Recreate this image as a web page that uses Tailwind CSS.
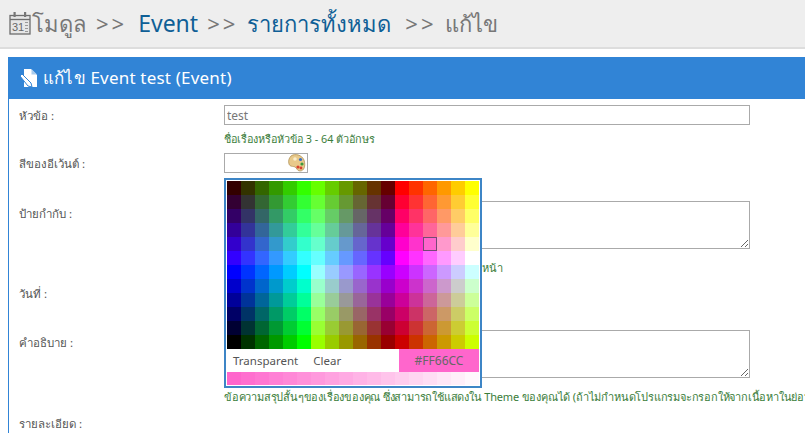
<!DOCTYPE html>
<html lang="th">
<head>
    <meta charset="utf-8"/>
    <title>Event</title>
    <script src="https://cdn.jsdelivr.net/npm/@tailwindcss/browser@4"></script>
</head>
<body class="relative h-[435px] w-[805px] overflow-hidden bg-white font-['Noto_Sans','DejaVu_Sans',sans-serif] text-[11.5px] text-[#555]">
<header class="flex h-[49px] items-center border-b-2 border-[#ddd] bg-[#eeeeee] pl-[9px] pb-[1px] text-[22px] text-[#777]">
    <svg class="mr-[1px] h-[24px] w-[22px] shrink-0" viewBox="0 0 22 24">
        <rect x="1" y="4.500" width="20" height="18.500" fill="#e6e6e6" stroke="#6e6e6e" stroke-width="1.300"/>
        <path d="M1 8.500h20" stroke="#6e6e6e" stroke-width="1.300"/>
        <rect x="4.500" y="1" width="2.200" height="5" fill="#777"/>
        <rect x="15" y="1" width="2.200" height="5" fill="#777"/>
        <text x="3" y="20" font-size="11" font-family="Liberation Sans" fill="#666">31</text>
        <path d="M16 11.500h3M16 14.500h3M16 17.500h3M16 20.500h3" stroke="#999"/>
    </svg>
    <span>โมดูล</span>
    <span class="ml-[10px] tracking-[3px]">&gt;&gt;</span>
    <a class="ml-[11px] text-[23px] text-[#0f5f96]">Event</a>
    <span class="ml-[9px] tracking-[3px]">&gt;&gt;</span>
    <a class="ml-[9px] text-[#0f5f96]">รายการทั้งหมด</a>
    <span class="ml-[14px] tracking-[3px]">&gt;&gt;</span>
    <span class="ml-[9px]">แก้ไข</span>
</header>

<main class="ml-[8px] mt-[8px] w-[797px] overflow-hidden border-l border-[#3184d6]">
    <h1 class="flex h-[42px] items-center bg-[#3184d6] pl-[11px] text-[17px] tracking-[0.2px] text-white">
        <svg class="mr-[5px] h-[20px] w-[18px] shrink-0" viewBox="0 0 18 20">
            <path d="M4 1h7l6 6v12H4z" fill="#fff"/>
            <path d="M11.500 1v5.500H17z" fill="#a9cbec"/>
            <path d="M0 8l2-2 9 9 1 4-4-1z" fill="#fff" stroke="#3184d6"/>
        </svg>
        <span>แก้ไข Event test (Event)</span>
    </h1>

    <form class="pl-[10px]">
        <div class="flex pt-[6px]">
            <label class="flex h-[20px] w-[205px] shrink-0 items-center pt-[2px]">หัวข้อ :</label>
            <div class="w-[526px]">
                <input class="block h-[20px] w-[526px] border border-[#aaa] px-[2px] text-[12px] text-[#777]" value="test"/>
                <p class="mt-[6px] h-[16px] leading-[16px] text-[10.8px] text-[#3a7d3a]">ชื่อเรื่องหรือหัวข้อ 3 - 64 ตัวอักษร</p>
            </div>
        </div>
        <div class="mt-[6px] flex">
            <label class="flex h-[20px] w-[205px] shrink-0 items-center pt-[2px]">สีของอีเว้นต์ :</label>
            <div class="flex h-[20px] w-[84px] items-center justify-end border border-[#aaa] pr-[1px]">
                <svg class="h-[18px] w-[18px]" viewBox="0 0 18 18">
                    <path d="M3 2c4-3 11-1 13 4 2 6 0 11-4 11-3 0-3-3-5-4-2-1-5 0-6-3C0 7 1 4 3 2z" fill="#e8c98a" stroke="#a98a4e" stroke-width=".7"/>
                    <circle cx="12.500" cy="5.500" r="1.600" fill="#3a6fc4"/>
                    <circle cx="14" cy="10" r="1.600" fill="#3c9a3c"/>
                    <circle cx="10" cy="13" r="1.600" fill="#d8402e"/>
                    <circle cx="13" cy="14" r="1.400" fill="#d8402e"/>
                    <circle cx="7" cy="5" r="1.800" fill="#fbeecb"/>
                </svg>
            </div>
        </div>
        <div class="mt-[28px] flex">
            <label class="flex h-[24px] w-[205px] shrink-0 items-center pt-[2px]">ป้ายกำกับ :</label>
            <div class="w-[526px]">
                <textarea class="block h-[48px] w-[526px] border border-[#aaa]"></textarea>
                <p class="mt-[11px] h-[16px] whitespace-nowrap leading-[16px] text-[11px] text-[#3a7d3a]">ป้ายกำกับจัดกลุ่ม คั่นแต่ละรายการด้วยจุลภาค ส่วนของหน้า</p>
            </div>
        </div>
        <div class="mt-[7px] flex">
            <label class="flex h-[20px] w-[205px] shrink-0 items-center pt-[2px]">วันที่ :</label>
            <input class="block h-[20px] w-[120px] border border-[#aaa]"/>
        </div>
        <div class="mt-[27px] flex">
            <label class="flex h-[24px] w-[205px] shrink-0 items-center pt-[2px]">คำอธิบาย :</label>
            <div class="w-[526px]">
                <textarea class="block h-[48px] w-[526px] border border-[#aaa]"></textarea>
                <p class="mt-[11px] h-[16px] whitespace-nowrap leading-[16px] text-[11px] tracking-[-0.2px] text-[#3a7d3a]">ข้อความสรุปสั้นๆของเรื่องของคุณ ซึ่งสามารถใช้แสดงใน Theme ของคุณได้ (ถ้าไม่กำหนดโปรแกรมจะกรอกให้จากเนื้อหาในย่อหน้าแรก)</p>
            </div>
        </div>
        <div class="mt-[8px] flex">
            <label class="flex h-[20px] w-[205px] shrink-0 items-center pt-[2px]">รายละเอียด :</label>
        </div>
    </form>
</main>

<div class="absolute left-[224px] top-[178px] w-[258px] border-2 border-[#3d85c6] bg-white p-[1px]">
    <div data-palette class="grid grid-cols-[repeat(18,14px)] auto-rows-[14px]"></div>
    <div class="flex h-[23px] items-center">
        <span class="ml-[6px]">Transparent</span>
        <span class="ml-[15px]">Clear</span>
        <span class="ml-auto flex h-full w-[80px] items-center justify-center bg-[#ff66cc] text-[12px] text-[#666]">#FF66CC</span>
    </div>
    <div data-shades class="grid grid-cols-[repeat(18,14px)] auto-rows-[13px]"></div>
    <div class="absolute left-[197px] top-[57px] h-[14px] w-[14px] border border-[#734a74]"></div>
</div>

<script>
    const steps = ['00', '33', '66', '99', 'CC', 'FF'];
    const palette = document.querySelector('[data-palette]');
    const shades = document.querySelector('[data-shades]');
    const cell = color => {
        const div = document.createElement('div');
        div.style.background = color;
        return div;
    };
    // top half: blue goes 00 -> FF, bottom half: FF -> 00, red changes per block
    const blue = ['00', '33', '66', '99', 'CC', 'FF', 'FF', 'CC', '99', '66', '33', '00'];
    blue.forEach((b, row) => {
        const reds = row < 6 ? ['33', '66', 'FF'] : ['00', '99', 'CC'];
        for (let col = 0; col < 18; col++) {
            const block = Math.floor(col / 6), i = col % 6;
            const g = steps[block === 1 ? 5 - i : i];
            palette.appendChild(cell('#' + reds[block] + g + b));
        }
    });
    // picked colour fading to white
    for (let i = 0; i < 18; i++) {
        const t = i / 18;
        const mix = v => Math.round(v + (255 - v) * t);
        shades.appendChild(cell(`rgb(${mix(255)},${mix(102)},${mix(204)})`));
    }
</script>
</body>
</html>
